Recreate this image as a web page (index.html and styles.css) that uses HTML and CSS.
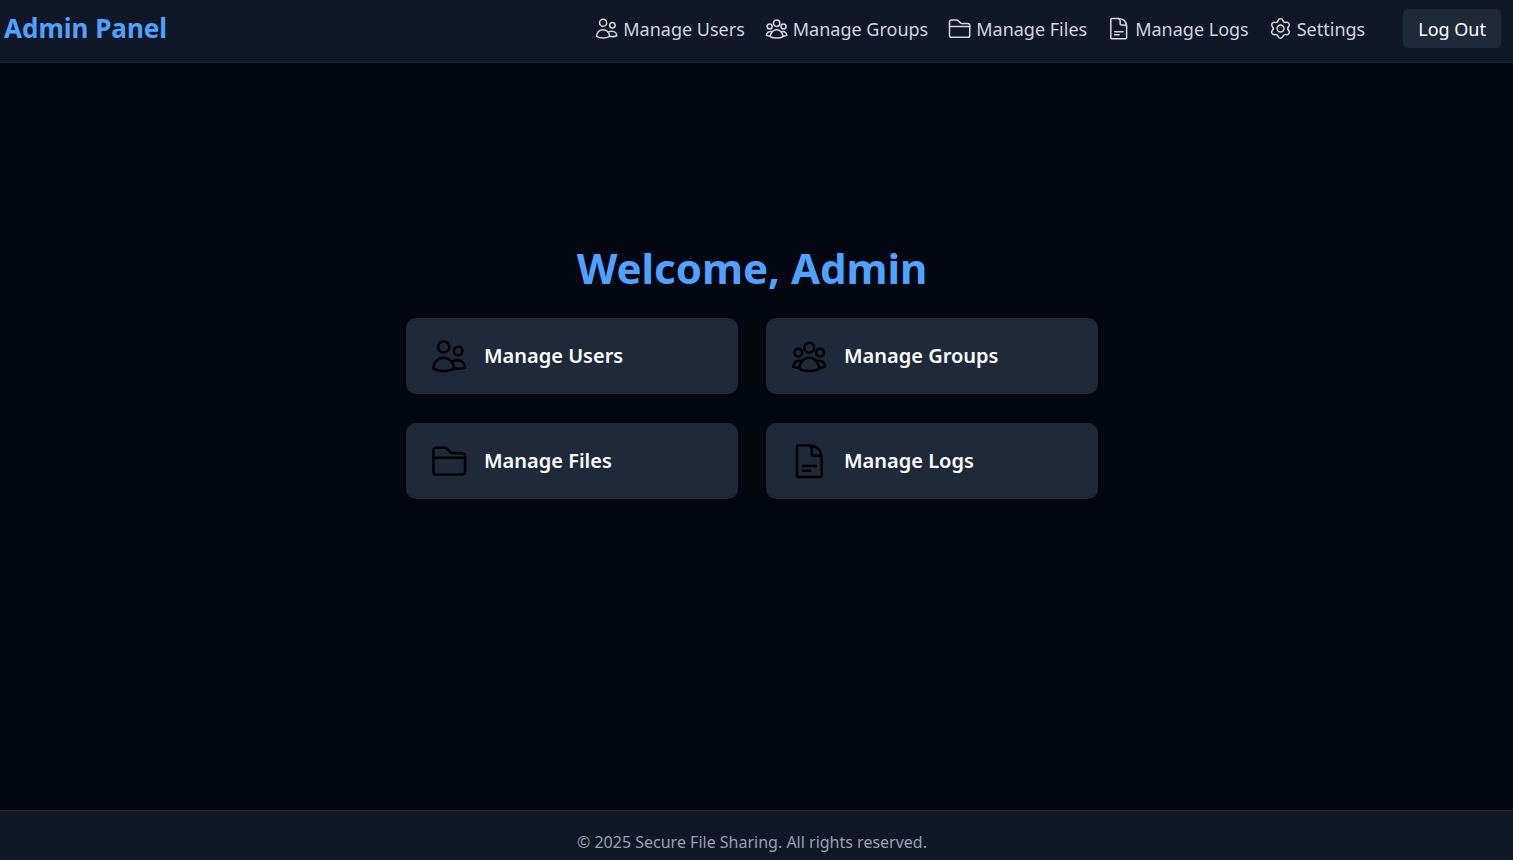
FILE: index.html
```html
<!DOCTYPE html>
<html lang="en">
<head>
<meta charset="utf-8">
<meta name="viewport" content="width=device-width, initial-scale=1">
<title>Admin Panel</title>
<link rel="stylesheet" href="styles.css">
</head>
<body class="page">
<svg class="sprite" aria-hidden="true">
  <symbol id="users" viewBox="0 0 36 36">
    <circle cx="12.7" cy="9" r="5.6"/>
    <circle cx="27.2" cy="12.9" r="4.3"/>
    <path d="M2.4 30.4C2.6 24.2 7 19.8 12.6 19.8S22.6 24.2 22.9 30.4C20.6 32 17 33 12.6 33S4.8 32 2.4 30.4Z"/>
    <path d="M20.4 23.7C22 22.8 24.2 22.3 26.4 22.3C31 22.3 34 25.4 34 29.4C31.5 30.7 27 31 22.7 30.3"/>
  </symbol>
  <symbol id="groups" viewBox="0 0 36 36">
    <circle cx="18.2" cy="9.7" r="5"/>
    <circle cx="7.3" cy="14.7" r="3.9"/>
    <circle cx="29" cy="14.7" r="3.9"/>
    <path d="M8 30.6C9.2 24 13 19.800 18.200 19.800S27.200 24 28.400 30.600C26 32.200 22.500 33 18.200 33S10.400 32.200 8 30.600Z"/>
    <path d="M11 23C6.500 21.800 2.600 23.800 2.300 28.700C3.800 29.500 6 29.800 8.300 29.500"/>
    <path d="M25.400 23C29.900 21.800 33.800 23.800 34.100 28.700C32.600 29.500 30.400 29.800 28.100 29.500"/>
  </symbol>
  <symbol id="files" viewBox="0 0 36 36">
    <path d="M5.200 4.800H13.500C14.600 4.800 15.200 5.100 16 5.900L19.300 9.200C20 9.900 20.500 10.100 21.500 10.100H31.200C33 10.100 34 11.200 34 12.900V28.800C34 30.600 33 31.600 31.200 31.600H5.200C3.400 31.600 2.400 30.600 2.400 28.800V7.600C2.400 5.900 3.400 4.800 5.200 4.800Z"/>
    <path d="M2.400 14.700H34"/>
  </symbol>
  <symbol id="logs" viewBox="0 0 36 36">
    <path d="M7.400 2.400H18C25.800 2.800 30.200 7.500 30.700 14.500V32.600C30.700 33.500 30.200 34 29.300 34H7.400C6.500 34 6 33.500 6 32.600V3.800C6 2.900 6.500 2.400 7.400 2.400Z"/>
    <path d="M18 2.400C19.700 3.100 20.600 4.300 20.600 6.200V10.700C20.600 11.900 21.200 12.500 22.400 12.500H26.500C29 12.500 30.400 13 30.700 14.500M12 23H25M12 27.700H19"/>
  </symbol>
  <symbol id="settings" viewBox="0 0 36 36">
    <circle cx="18" cy="18" r="5.400"/>
    <path d="M14.200 5.600C15.200 1.700 20.800 1.700 21.800 5.600C22.400 7.700 24.700 9 26.800 8.400C30.700 7.400 33.500 12.200 30.700 15C29.100 16.600 29.100 19.400 30.700 21C33.500 23.800 30.700 28.600 26.800 27.600C24.700 27 22.400 28.300 21.800 30.400C20.800 34.300 15.200 34.300 14.200 30.400C13.600 28.300 11.300 27 9.200 27.600C5.300 28.600 2.500 23.800 5.300 21C6.900 19.400 6.900 16.600 5.300 15C2.500 12.200 5.300 7.400 9.200 8.400C11.300 9 13.600 7.700 14.200 5.600Z"/>
  </symbol>
</svg>

<header class="header">
  <a class="brand" href="#">Admin Panel</a>
  <nav class="nav" aria-label="Main">
    <a class="nav-link" href="#"><svg class="nav-icon"><use href="#users"/></svg>Manage Users</a>
    <a class="nav-link" href="#"><svg class="nav-icon"><use href="#groups"/></svg>Manage Groups</a>
    <a class="nav-link" href="#"><svg class="nav-icon"><use href="#files"/></svg>Manage Files</a>
    <a class="nav-link" href="#"><svg class="nav-icon"><use href="#logs"/></svg>Manage Logs</a>
    <a class="nav-link" href="#"><svg class="nav-icon"><use href="#settings"/></svg>Settings</a>
    <button class="logout" type="button">Log Out</button>
  </nav>
</header>

<main class="main">
  <h1 class="welcome">Welcome, Admin</h1>
  <div class="cards">
    <a class="card" href="#"><svg class="card-icon"><use href="#users"/></svg>Manage Users</a>
    <a class="card" href="#"><svg class="card-icon"><use href="#groups"/></svg>Manage Groups</a>
    <a class="card" href="#"><svg class="card-icon"><use href="#files"/></svg>Manage Files</a>
    <a class="card" href="#"><svg class="card-icon"><use href="#logs"/></svg>Manage Logs</a>
  </div>
</main>

<footer class="footer">© 2025 Secure File Sharing. All rights reserved.</footer>
</body>
</html>
```
FILE: styles.css
```css
* {
  box-sizing: border-box;
}

.page {
  display: flex;
  flex-direction: column;
  min-height: 100vh;
  margin: 0;
  background: #030712;
  color: #ffffff;
  font-family: "Segoe UI", "Noto Sans", sans-serif;
}

.sprite {
  display: none;
}

.header {
  display: flex;
  align-items: center;
  justify-content: space-between;
  padding: 9px 12px 14px 4px;
  background: #101828;
  border-bottom: 1px solid #1e2939;
}

.brand {
  color: #51a2ff;
  font-size: 26px;
  font-weight: 700;
  line-height: 39px;
  text-decoration: none;
}

.nav {
  display: flex;
  align-items: center;
  gap: 20px;
}

.nav-link {
  display: flex;
  align-items: center;
  gap: 5px;
  color: #d1d5dc;
  font-size: 18px;
  line-height: 28px;
  text-decoration: none;
}

.nav-icon {
  width: 23px;
  height: 23px;
}

.nav-icon,
.card-icon {
  flex: none;
  fill: none;
  stroke: currentColor;
  stroke-width: 2.4;
  stroke-linecap: round;
  stroke-linejoin: round;
}

.logout {
  margin-left: 18px;
  padding: 6px 15px 5px;
  border: 0;
  border-radius: 5px;
  background: #1e2939;
  color: #ffffff;
  font-family: inherit;
  font-size: 18px;
  line-height: 28px;
}

.main {
  display: flex;
  flex: 1;
  flex-direction: column;
  align-items: center;
  justify-content: center;
  gap: 20px;
  padding: 0 9px 136px 0;
}

.welcome {
  margin: 0;
  color: #51a2ff;
  font-size: 42px;
  font-weight: 700;
  line-height: 60px;
}

.cards {
  display: grid;
  grid-template-columns: 1fr 1fr;
  gap: 29px 28px;
  width: 100%;
  max-width: 692px;
}

.card {
  display: flex;
  align-items: center;
  gap: 17px;
  padding: 20px 25px;
  border-radius: 10px;
  background: #1e2939;
  color: #ffffff;
  font-size: 20px;
  font-weight: 600;
  line-height: 36px;
  text-decoration: none;
}

.card-icon {
  width: 36px;
  height: 36px;
  color: #000000;
}

.footer {
  padding: 19px 9px 5px 0;
  border-top: 1px solid #1e2939;
  background: #101828;
  color: #99a1af;
  font-size: 16px;
  line-height: 25px;
  text-align: center;
}
```
